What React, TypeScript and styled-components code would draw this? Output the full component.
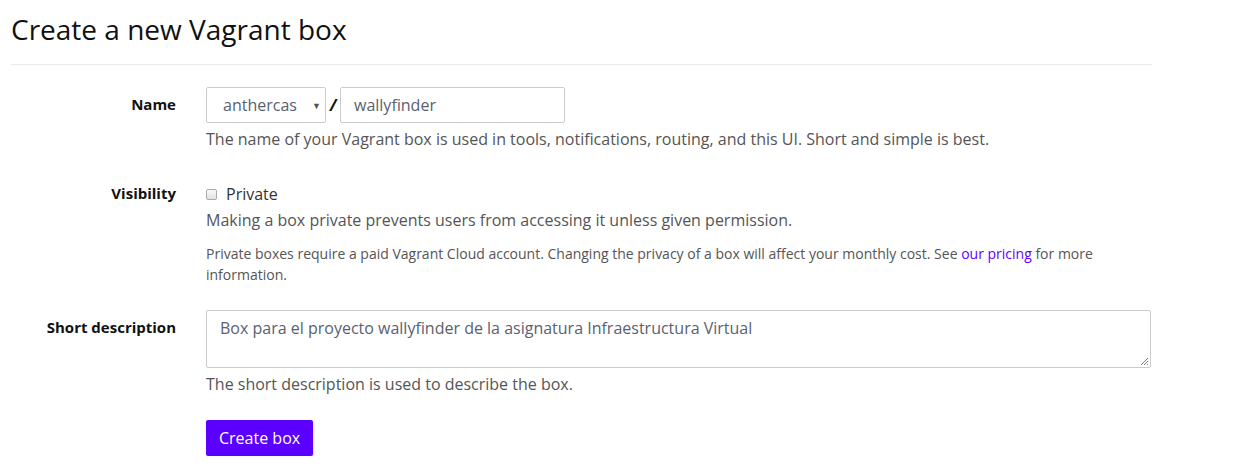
import React from "react";
import styled, { createGlobalStyle } from "styled-components";

const Global = createGlobalStyle`
  html, body { margin: 0; padding: 0; background: #fff; }
  body { font-family: "Open Sans", "Liberation Sans", sans-serif; color: #333; font-size: 16px; }
  * { box-sizing: border-box; }
`;

const Page = styled.div`
  width: 1141px;
  margin-left: 11px;
  padding-top: 11px;
`;

const Title = styled.h1`
  margin: 0;
  font-size: 28px;
  font-weight: 400;
  line-height: 36px;
  color: #111;
  padding-bottom: 17px;
  border-bottom: 1px solid #eaeaea;
`;

const Form = styled.form`
  display: grid;
  grid-template-columns: 165px 1fr;
  column-gap: 30px;
  padding-top: 22px;
`;

const Label = styled.label<{ $pt: number }>`
  font-weight: 700;
  font-size: 15px;
  color: #111;
  text-align: right;
  padding-top: ${(p) => p.$pt}px;
  line-height: 20px;
`;

const Field = styled.div<{ $mb: number }>`
  margin-bottom: ${(p) => p.$mb}px;
`;

const NameRow = styled.div`
  display: flex;
  align-items: center;
`;

const SelectBox = styled.div`
  width: 120px;
  height: 36px;
  border: 1px solid #ccc;
  border-radius: 2px;
  display: flex;
  align-items: center;
  padding-left: 16px;
  position: relative;
  color: #5a6170;
  font-size: 16px;
`;

const Caret = styled.span`
  position: absolute;
  right: 4px;
  top: 11px;
  font-size: 9px;
  color: #555;
`;

const Slash = styled.span`
  font-weight: 700;
  font-size: 16px;
  color: #111;
  width: 14px;
  text-align: center;
  font-style: italic;
`;

const TextInput = styled.div`
  width: 225px;
  height: 36px;
  border: 1px solid #ccc;
  border-radius: 2px;
  display: flex;
  align-items: center;
  padding-left: 13px;
  color: #5a6170;
  font-size: 16px;
`;

const Help = styled.p`
  margin: 6px 0 0;
  color: #555;
  font-size: 16px;
  line-height: 21px;
`;

const Small = styled.p`
  margin: 12px 0 0;
  color: #555;
  font-size: 14px;
  line-height: 21px;
`;

const Link = styled.a`
  color: #6000ff;
  text-decoration: none;
`;

const CheckRow = styled.label`
  display: flex;
  align-items: center;
  gap: 9px;
  font-size: 16px;
  color: #333;
  line-height: 20px;
  padding-top: 2px;
`;

const Check = styled.span`
  width: 11px;
  height: 11px;
  border: 1px solid #aaa;
  border-radius: 2px;
  background: linear-gradient(#fafafa, #e2e2e2);
`;

const TextArea = styled.div`
  width: 945px;
  height: 58px;
  border: 1px solid #ccc;
  border-radius: 2px;
  padding: 6px 13px;
  color: #5a6170;
  font-size: 16px;
  line-height: 22px;
  position: relative;
`;

const Grip = styled.svg`
  position: absolute;
  right: 1px;
  bottom: 1px;
`;

const Button = styled.button`
  margin-top: 25px;
  background: #5b00ff;
  color: #fff;
  border: none;
  border-radius: 2px;
  height: 36px;
  padding: 0 13px;
  font-family: "Open Sans", "Liberation Sans", sans-serif;
  font-size: 16px;
  box-shadow: 1px 2px 2px rgba(0, 0, 0, 0.12);
`;

export default function App() {
  return (
    <>
      <Global />
      <Page>
        <Title>Create a new Vagrant box</Title>
        <Form>
          <Label $pt={7}>Name</Label>
          <Field $mb={32}>
            <NameRow>
              <SelectBox>
                anthercas
                <Caret>▼</Caret>
              </SelectBox>
              <Slash>/</Slash>
              <TextInput>wallyfinder</TextInput>
            </NameRow>
            <Help>
              The name of your Vagrant box is used in tools, notifications, routing, and this UI. Short and simple is best.
            </Help>
          </Field>

          <Label $pt={1}>Visibility</Label>
          <Field $mb={25}>
            <CheckRow>
              <Check />
              Private
            </CheckRow>
            <Help>Making a box private prevents users from accessing it unless given permission.</Help>
            <Small>
              Private boxes require a paid Vagrant Cloud account. Changing the privacy of a box will affect your monthly cost. See{" "}
              <Link href="#">our pricing</Link> for more information.
            </Small>
          </Field>

          <Label $pt={7}>Short description</Label>
          <Field $mb={0}>
            <TextArea>
              Box para el proyecto wallyfinder de la asignatura Infraestructura Virtual
              <Grip width="10" height="10" viewBox="0 0 10 10">
                <path d="M9 2 L2 9 M9 5 L5 9 M9 8 L8 9" stroke="#777" strokeWidth="1" />
              </Grip>
            </TextArea>
            <Help>The short description is used to describe the box.</Help>
            <Button type="button">Create box</Button>
          </Field>
        </Form>
      </Page>
    </>
  );
}
